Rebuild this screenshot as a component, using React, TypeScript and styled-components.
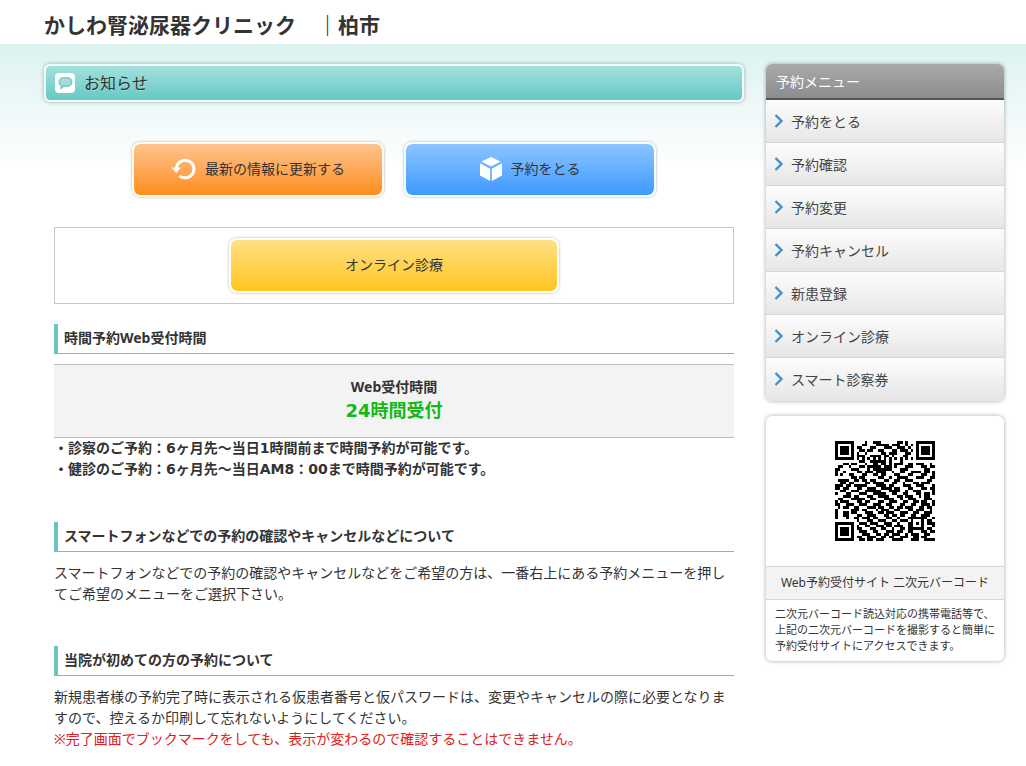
import React from "react";
import styled, { createGlobalStyle, css } from "styled-components";

const GlobalStyle = createGlobalStyle`
  *, *::before, *::after { box-sizing: border-box; }
  body {
    margin: 0;
    background: #fff;
    color: #333;
    font-family: "Noto Sans", "Noto Sans CJK JP", sans-serif;
    font-size: 14px;
    line-height: 21px;
  }
  h1, h2, h3, p, ul { margin: 0; padding: 0; }
  ul { list-style: none; }
  a { color: inherit; text-decoration: none; }
`;

const Header = styled.header`
  display: flex;
  align-items: center;
  height: 44px;
  padding: 6px 44px 0;
`;

const SiteTitle = styled.h1`
  font-size: 21px;
  line-height: 30px;
  white-space: pre;
`;

const Body = styled.div`
  display: flex;
  align-items: flex-start;
  gap: 22px;
  padding: 20px 22px 18px 44px;
  background: linear-gradient(#dcf2f1, #fff 124px);
`;

const Main = styled.main`
  flex: 1;
  min-width: 0;
`;

const Banner = styled.h2`
  display: flex;
  align-items: center;
  gap: 9px;
  height: 38px;
  padding: 0 9px;
  border: 2px solid #f0fcfb;
  border-radius: 6px;
  background: linear-gradient(#a4e1dd, #66c8c4) padding-box;
  box-shadow: 0 0 4px rgba(0, 0, 0, 0.3);
  font-size: 16px;
  font-weight: 400;
  text-shadow: 0 1px 0 rgba(255, 255, 255, 0.3);
`;

const Content = styled.div`
  padding: 0 10px;
`;

const Actions = styled.div`
  display: flex;
  justify-content: center;
  gap: 20px;
  padding: 40px 0 30px;
`;

const tones = {
  orange: css`
    background: linear-gradient(#fdc490, #ff8d1e) padding-box;
    border-color: #fff8ec;
  `,
  blue: css`
    background: linear-gradient(#8cc4ff, #3d9aff) padding-box;
    border-color: #f3fdff;
  `,
  yellow: css`
    background: linear-gradient(#ffe085, #ffc620) padding-box;
    border-color: #fffdf4;
  `,
};

const ActionButton = styled.button<{ $tone: keyof typeof tones; $wide?: boolean }>`
  display: flex;
  align-items: center;
  justify-content: center;
  gap: 9px;
  width: ${(p) => (p.$wide ? 330 : 252)}px;
  height: 55px;
  padding: 0 0 2px;
  border: 2px solid;
  border-radius: 8px;
  box-shadow: 0 0 3px rgba(0, 0, 0, 0.3);
  color: #333;
  font: inherit;
  cursor: pointer;
  ${(p) => tones[p.$tone]}
`;

const OnlineBox = styled.div`
  display: flex;
  justify-content: center;
  padding: 10px;
  border: 1px solid #c8c8c8;
  margin-bottom: 20px;
`;

const SectionTitle = styled.h3`
  padding: 3px 0 5px 6px;
  border-left: 4px solid #6bc5bf;
  border-bottom: 1px solid #76b9b8;
  border-image: linear-gradient(#6bc5bf, #6bc5bf) 1;
  border-image-width: 0 0 1px 4px;
  margin-bottom: 10px;
  font-size: 14px;
  font-weight: 700;
`;

const Hours = styled.div`
  padding: 11px 0 13px;
  border: solid #bbb;
  border-width: 1px 0;
  background: #f3f3f3;
  font-weight: 700;
  text-align: center;
`;

const HoursValue = styled.p`
  color: #13b918;
  font-family: "DejaVu Sans", "Noto Sans CJK JP", sans-serif;
  font-size: 18px;
  line-height: 27px;
`;

const Notes = styled.ul`
  margin-bottom: 42px;
  font-family: "DejaVu Sans", "Noto Sans CJK JP", sans-serif;
  font-weight: 700;
`;

const Paragraph = styled.p`
  margin-bottom: 42px;
  &:last-child { margin-bottom: 0; }
`;

const Warning = styled.span`
  display: block;
  color: #e02020;
`;

const Sidebar = styled.aside`
  display: flex;
  flex-direction: column;
  gap: 15px;
  width: 238px;
  flex: none;
`;

const Card = styled.section`
  overflow: hidden;
  border-radius: 6px;
  background: #fff;
  box-shadow: 0 0 4px rgba(0, 0, 0, 0.35);
`;

const MenuTitle = styled.h2`
  display: flex;
  align-items: center;
  height: 36px;
  padding: 0 10px;
  border-bottom: 2px solid #555;
  background: linear-gradient(#aaa, #8c8c8c);
  color: #fff;
  font-size: 14px;
  font-weight: 400;
`;

const MenuItem = styled.li`
  border-bottom: 1px solid #d6d6d6;
  background: linear-gradient(#fdfdfd, #e6e6e6);
  &:last-child { border-bottom-color: #e6e6e6; }
`;

const MenuLink = styled.a`
  display: flex;
  align-items: center;
  gap: 7px;
  height: 42px;
  padding: 0 8px;
  color: #444;
`;

const CodeArea = styled.div`
  display: flex;
  justify-content: center;
  padding: 25px 0;
`;

const CodeTitle = styled.h3`
  padding: 5px 0 6px;
  border: solid #d6d6d6;
  border-width: 1px 0;
  background: #f3f3f3;
  font-size: 12px;
  font-weight: 400;
  text-align: center;
`;

const CodeText = styled.p`
  padding: 6px 8px 7px 9px;
  font-size: 11px;
  line-height: 16px;
`;

const BubbleIcon = () => (
  <svg width="20" height="20" viewBox="0 0 20 20" aria-hidden="true">
    <rect width="20" height="20" rx="4" fill="#fff" />
    <path d="M8 4h4.500a4.500 4.500 0 0 1 0 10H9l-3.800 3 .3-4A5 5 0 0 1 8 4Z" fill="#7fcfcb" />
    <path d="M8.500 5.500h3.500a3.300 3.300 0 0 1 0 6.600H8.500a3.300 3.300 0 0 1 0-6.600Z" fill="#a9dcda" />
  </svg>
);

const ReloadIcon = () => (
  <svg width="25" height="24" viewBox="0 0 25 24" aria-hidden="true">
    <path d="M5.400 11A8.800 8.800 0 1 1 8.500 18.800" fill="none" stroke="#fff" strokeWidth="3" />
    <path d="M.5 10.500h9.500L5.200 16Z" fill="#fff" />
  </svg>
);

const CubeIcon = () => (
  <svg width="22" height="24" viewBox="0 0 22 24" fill="#fff" aria-hidden="true">
    <path d="M11 0 20.600 4.500 11 9.600 1.400 4.500Z" />
    <path d="M0 6.300 10.200 11.700V24L0 18.600Z" />
    <path d="M22 6.300 11.800 11.700V24L22 18.600Z" />
  </svg>
);

const Chevron = () => (
  <svg width="10" height="14" viewBox="0 0 10 14" aria-hidden="true">
    <path d="M1.500 1 7.500 7l-6 6" fill="none" stroke="#3f92cc" strokeWidth="2.400" />
  </svg>
);

const codeRows = [
  "1111111000010011100000011010001111111",
  "1000001000110001111101110010101000001",
  "1011101011000110001110011101001011101",
  "1011101001101100110001101110101011101",
  "1011101010010000011011100011001011101",
  "1000001011100111101101000110001000001",
  "1111111010101010101010101010101111111",
  "0000000001100111111010001000000000000",
  "0001101100010011011010111001101110010",
  "0110010001101111101110100011100011011",
  "1100001110001011111110001110000001100",
  "1001000011011101111001001100111101101",
  "1010011000110011011000110001100011001",
  "0000001101100000110010011110001110011",
  "0111100110110110001100110011100000110",
  "0011011000011011110001100100011011100",
  "1110110111110001111011000111001110001",
  "1101100011001110011110110001100011011",
  "0011001110011111100011110010011100001",
  "1000110001110011111001100110001101101",
  "0001110110001100111100011011100101100",
  "0110001111100110001111001001110001110",
  "1011100011011000110011100110011011001",
  "1100111001110011100110001100110011101",
  "0101100110001110110011011011100110110",
  "1000001110110001011100110001101110010",
  "1001101100011100110111001110011001110",
  "1001100011001110001101101100110011100",
  "1000100110111011000110010001111111001",
  "0000000010001100111001101110100010110",
  "1111111001110111001110010001101010111",
  "1000001010011001110110111001100010001",
  "1011101011000110011001001101111110110",
  "1011101001110011000111011001100011011",
  "1011101000111001101101110010111001100",
  "1000001011001110011011001110011011000",
  "1111111001101101110001111000111001111",
];

const codePath = codeRows
  .flatMap((row, y) =>
    Array.from(row.matchAll(/1+/g), (m) => `M${m.index} ${y}h${m[0].length}v1h-${m[0].length}z`)
  )
  .join("");

const QrCode = () => (
  <svg width="100" height="100" viewBox="0 0 37 37" shapeRendering="crispEdges" role="img" aria-label="二次元バーコード">
    <path d={codePath} />
  </svg>
);

const menu = ["予約をとる", "予約確認", "予約変更", "予約キャンセル", "新患登録", "オンライン診療", "スマート診察券"];

export default function App() {
  return (
    <div lang="ja">
      <GlobalStyle />
      <Header>
        <SiteTitle>かしわ腎泌尿器クリニック　｜柏市</SiteTitle>
      </Header>
      <Body>
        <Main>
          <Banner>
            <BubbleIcon />
            お知らせ
          </Banner>
          <Content>
            <Actions>
              <ActionButton type="button" $tone="orange">
                <ReloadIcon />
                最新の情報に更新する
              </ActionButton>
              <ActionButton type="button" $tone="blue">
                <CubeIcon />
                予約をとる
              </ActionButton>
            </Actions>
            <OnlineBox>
              <ActionButton type="button" $tone="yellow" $wide>
                オンライン診療
              </ActionButton>
            </OnlineBox>
            <SectionTitle>時間予約Web受付時間</SectionTitle>
            <Hours>
              <p>Web受付時間</p>
              <HoursValue>24時間受付</HoursValue>
            </Hours>
            <Notes>
              <li>・診察のご予約：6ヶ月先～当日1時間前まで時間予約が可能です。</li>
              <li>・健診のご予約：6ヶ月先～当日AM8：00まで時間予約が可能です。</li>
            </Notes>
            <SectionTitle>スマートフォンなどでの予約の確認やキャンセルなどについて</SectionTitle>
            <Paragraph>
              スマートフォンなどでの予約の確認やキャンセルなどをご希望の方は、一番右上にある予約メニューを押してご希望のメニューをご選択下さい。
            </Paragraph>
            <SectionTitle>当院が初めての方の予約について</SectionTitle>
            <Paragraph>
              新規患者様の予約完了時に表示される仮患者番号と仮パスワードは、変更やキャンセルの際に必要となりますので、控えるか印刷して忘れないようにしてください。
              <Warning>※完了画面でブックマークをしても、表示が変わるので確認することはできません。</Warning>
            </Paragraph>
          </Content>
        </Main>
        <Sidebar>
          <Card>
            <MenuTitle>予約メニュー</MenuTitle>
            <nav>
              <ul>
                {menu.map((label) => (
                  <MenuItem key={label}>
                    <MenuLink href="#">
                      <Chevron />
                      {label}
                    </MenuLink>
                  </MenuItem>
                ))}
              </ul>
            </nav>
          </Card>
          <Card>
            <CodeArea>
              <QrCode />
            </CodeArea>
            <CodeTitle>Web予約受付サイト 二次元バーコード</CodeTitle>
            <CodeText>
              二次元バーコード読込対応の携帯電話等で、上記の二次元バーコードを撮影すると簡単に予約受付サイトにアクセスできます。
            </CodeText>
          </Card>
        </Sidebar>
      </Body>
    </div>
  );
}
